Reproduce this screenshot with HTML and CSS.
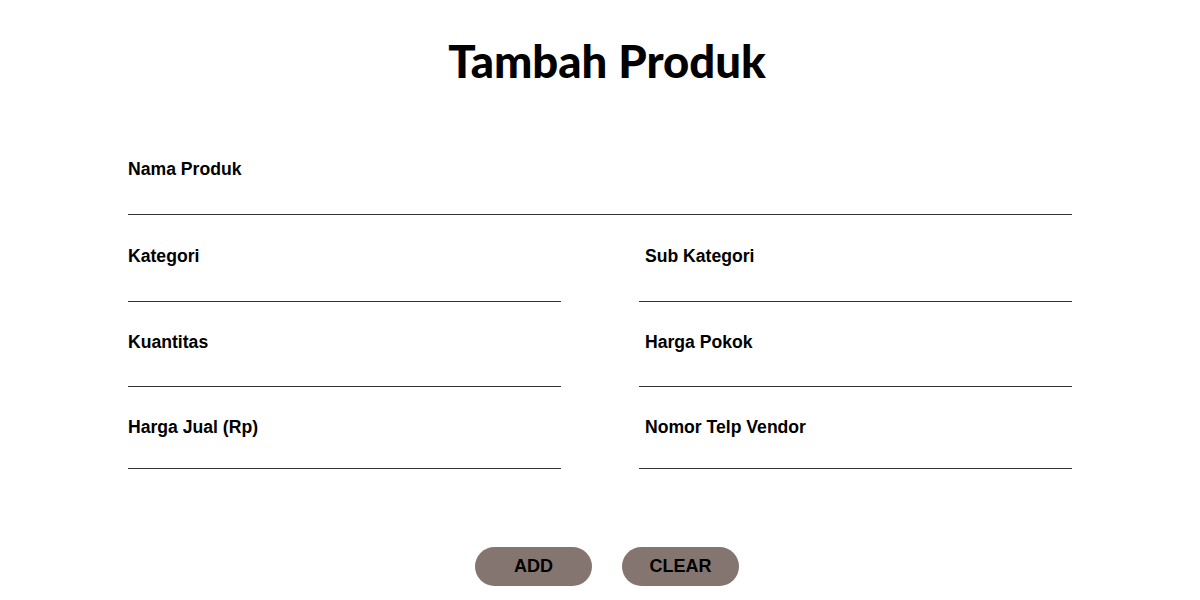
FILE: index.html
```html
<!doctype html>
<html>
<head>
<meta charset="utf-8">
<title>Tambah Produk</title>
<link rel="stylesheet" href="styles.css">
</head>
<body>
	<div class="page">
		<h1 class="title">Tambah Produk</h1>

		<form class="product-form">
			<div class="field full">
				<label for="nama">Nama Produk</label>
				<input type="text" id="nama">
			</div>

			<div class="field tall">
				<label for="kategori">Kategori</label>
				<input type="text" id="kategori">
			</div>
			<div class="field right tall">
				<label for="subkategori">Sub Kategori</label>
				<input type="text" id="subkategori">
			</div>

			<div class="field">
				<label for="kuantitas">Kuantitas</label>
				<input type="text" id="kuantitas">
			</div>
			<div class="field right">
				<label for="pokok">Harga Pokok</label>
				<input type="text" id="pokok">
			</div>

			<div class="field short">
				<label for="jual">Harga Jual (Rp)</label>
				<input type="text" id="jual">
			</div>
			<div class="field right short">
				<label for="telp">Nomor Telp Vendor</label>
				<input type="text" id="telp">
			</div>

			<div class="buttons">
				<input type="button" class="btn" value="ADD">
				<input type="reset" class="btn" value="CLEAR">
			</div>
		</form>
	</div>
</body>
</html>
```

FILE: styles.css
```css
body {
    margin: 0;
    background: #fff;
    font-family: "Liberation Sans", Arial, sans-serif;
    color: #000;
}

.page {
    width: 944px;
    margin: 0 auto;
    padding-top: 36px;
}

.title {
    margin: 0;
    padding-left: 14px;
    font-family: Lato, "DejaVu Sans", sans-serif;
    font-weight: 900;
    font-size: 45.5px;
    line-height: 50px;
    text-align: center;
}

.product-form {
    margin-top: 73px;
    display: grid;
    grid-template-columns: 433px 433px;
    column-gap: 78px;
    row-gap: 30px;
}

.field label {
    display: block;
    font-weight: bold;
    font-size: 17.6px;
    line-height: 20px;
}

.field.right label {
    padding-left: 6px;
}

.field input {
    display: block;
    width: 100%;
    height: 34px;
    box-sizing: content-box;
    padding: 0;
    border: none;
    border-bottom: 1px solid #333;
    outline: none;
    font-family: inherit;
    font-size: 16px;
}

.full {
    grid-column: 1 / 3;
    margin-bottom: 1px;
}

.full input,
.tall input {
    height: 35px;
}

.short input {
    height: 31px;
}

.buttons {
    grid-column: 1 / 3;
    margin-top: 48px;
    padding-left: 14px;
    display: flex;
    justify-content: center;
    gap: 30px;
}

.btn {
    width: 117px;
    height: 39px;
    border: none;
    border-radius: 20px;
    background: #857571;
    color: #000;
    font-family: "Liberation Sans", Arial, sans-serif;
    font-weight: bold;
    font-size: 18px;
    cursor: pointer;
}
```
